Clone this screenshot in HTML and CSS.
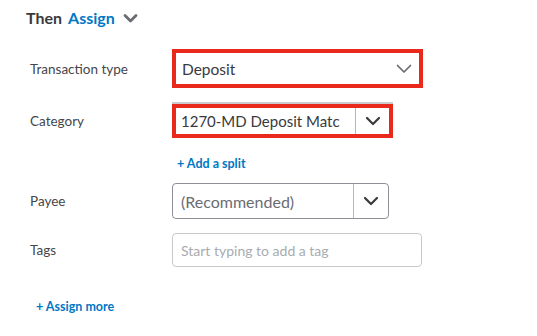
FILE: index.html
```html
<!DOCTYPE html>
<html>
<head>
<meta charset="utf-8">
<link rel="stylesheet" href="styles.css">
</head>
<body>
<div class="page">
  <div class="header">
    <span class="then">Then</span>
    <span class="assign">Assign</span>
    <svg class="hchev" width="15" height="10" viewBox="0 0 15 10"><path d="M2 2.5 L7.5 8 L13 2.5" fill="none" stroke="#6b6c72" stroke-width="2.8" stroke-linecap="round" stroke-linejoin="round"/></svg>
  </div>
  <div class="form">
    <div class="row r1">
      <div class="label">Transaction type</div>
      <div class="field select red wide">
        <span class="value">Deposit</span>
        <svg class="chev-light" width="16" height="10" viewBox="0 0 16 10"><path d="M1.5 1.5 L8 8 L14.5 1.5" fill="none" stroke="#6b6c72" stroke-width="1.7" stroke-linecap="round" stroke-linejoin="round"/></svg>
      </div>
    </div>
    <div class="row r2">
      <div class="label">Category</div>
      <div class="field combo red cat">
        <span class="value clip">1270-MD Deposit Matc</span>
        <span class="btn"><svg width="16" height="10" viewBox="0 0 16 10"><path d="M2 2 L8 8 L14 2" fill="none" stroke="#393a3d" stroke-width="2.2" stroke-linecap="round" stroke-linejoin="round"/></svg></span>
      </div>
    </div>
    <div class="row r3">
      <div class="label"></div>
      <a class="link split">+ Add a split</a>
    </div>
    <div class="row r4">
      <div class="label">Payee</div>
      <div class="field combo payee">
        <span class="value muted">(Recommended)</span>
        <span class="btn"><svg width="16" height="10" viewBox="0 0 16 10"><path d="M2 2 L8 8 L14 2" fill="none" stroke="#393a3d" stroke-width="2.2" stroke-linecap="round" stroke-linejoin="round"/></svg></span>
      </div>
    </div>
    <div class="row r5">
      <div class="label">Tags</div>
      <div class="field tags">
        <span class="placeholder">Start typing to add a tag</span>
      </div>
    </div>
  </div>
  <a class="link more">+ Assign more</a>
</div>
</body>
</html>
```
FILE: styles.css
```css
* { box-sizing: border-box; }
body {
  margin: 0;
  background: #fff;
  font-family: Lato, "Noto Sans", sans-serif;
  color: #393a3d;
}
.page {
  width: 537px;
  height: 336px;
}
.header {
  display: flex;
  align-items: center;
  height: 34px;
  padding-left: 26px;
  padding-top: 1px;
}
.then {
  font-size: 16px;
  font-weight: 700;
  color: #393a3d;
}
.assign {
  font-size: 16px;
  font-weight: 700;
  color: #0077c5;
  margin-left: 6px;
}
.hchev { margin-left: 8px; margin-top: 1px; }
.form {
  display: flex;
  flex-direction: column;
  padding-left: 30px;
}
.row {
  display: flex;
  align-items: center;
}
.label {
  width: 142px;
  font-size: 13.5px;
  color: #45464a;
}
.r1 { margin-top: 15px; }
.r2 { margin-top: 16px; }
.r3 { margin-top: 17px; height: 16px; }
.r4 { margin-top: 12px; }
.r5 { margin-top: 14px; }
.field {
  display: flex;
  align-items: center;
  background: #fff;
}
.red { border: 4px solid #e8291c; }
.wide {
  width: 251px;
  height: 39px;
  padding-left: 6px;
  padding-right: 7px;
  justify-content: space-between;
}
.value {
  font-size: 15px;
  color: #393a3d;
  white-space: nowrap;
}
.wide .value { font-size: 15.5px; }
.value.muted { color: #6b6c72; font-size: 16px; }
.clip {
  overflow: hidden;
  flex: 1;
}
.combo { padding-left: 8px; }
.cat {
  width: 221px;
  height: 34px;
  padding-left: 5px;
  box-shadow: 0 -2px 0 0 #c9cbcf;
}
.btn {
  display: flex;
  align-items: center;
  justify-content: center;
  width: 35px;
  align-self: stretch;
  border-left: 1px solid #b3b6bc;
  flex: none;
}
.cat .btn { width: 34px; }
.payee {
  width: 217px;
  height: 36px;
  border: 1px solid #8d9096;
  border-radius: 4px;
}
.payee .value { flex: 1; }
.tags {
  width: 250px;
  height: 34px;
  border: 1px solid #c7c9cd;
  border-radius: 4px;
  padding-left: 8px;
}
.placeholder {
  font-size: 14px;
  color: #a8abb0;
}
.link {
  display: block;
  color: #0077c5;
  font-size: 12.5px;
  font-weight: 700;
  text-decoration: none;
}
.split { margin-left: 5px; }
.more {
  margin-top: 32px;
  margin-left: 36px;
  line-height: 16px;
}
```
